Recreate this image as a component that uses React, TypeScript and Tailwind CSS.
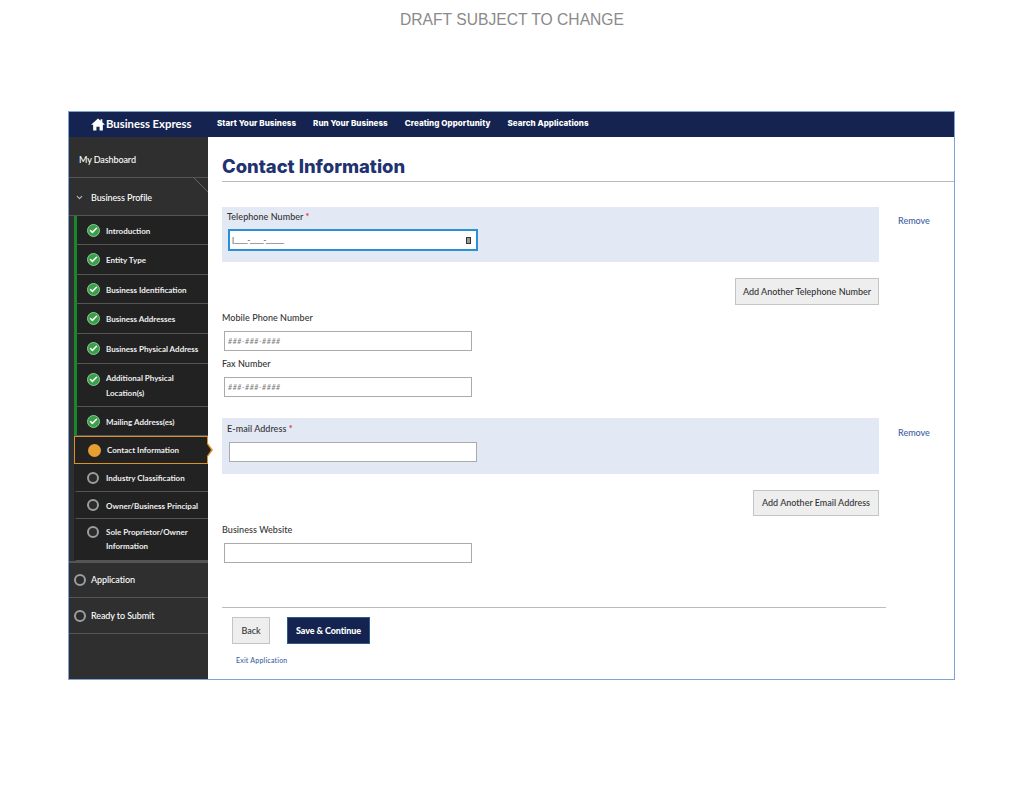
import { Check, ChevronDown } from "lucide-react";

const font = "[font-family:Lato,'Liberation_Sans',sans-serif]";

function StepIcon({ state }: { state: "done" | "current" | "todo" }) {
  if (state === "done") {
    return (
      <span className="flex h-[13px] w-[13px] shrink-0 items-center justify-center rounded-full border border-[#8fc796] bg-[#38a047]">
        <Check size={9} strokeWidth={4} className="text-white" />
      </span>
    );
  }
  if (state === "current") {
    return <span className="h-[13px] w-[13px] shrink-0 rounded-full bg-[#e5a02f]" />;
  }
  return <span className="h-[12px] w-[12px] shrink-0 rounded-full border-2 border-[#9d9d9d] bg-[#2c2c2c]" />;
}

function SubItem({
  label,
  second,
  state,
  height,
  top,
  shift,
  leading,
}: {
  label: string;
  second?: string;
  state: "done" | "todo";
  height: string;
  top?: string;
  shift?: string;
  leading?: string;
}) {
  return (
    <div
      className={`ml-[5px] flex border-b border-b-[#555] border-l-[3px] bg-[#222] pr-1 pl-[10px] ${height} ${
        second ? `items-start ${top}` : "items-center"
      } ${state === "done" ? "border-l-[#15892d]" : "border-l-[#222]"}`}
    >
      <StepIcon state={state} />
      <div
        className={`text-[8px] font-bold whitespace-nowrap text-[#eee] ${state === "done" ? "ml-[6px]" : "ml-[7px]"} ${
          second ? `${leading} ${shift}` : "pt-px"
        }`}
      >
        {label}
        {second && <div>{second}</div>}
      </div>
    </div>
  );
}

function TextInput({ placeholder }: { placeholder?: string }) {
  return (
    <div className="flex h-[20px] w-[248px] items-center border border-[#aaa] bg-white pl-[3px]">
      {placeholder && <span className="text-[7px] italic tracking-[0.6px] text-[#777]">{placeholder}</span>}
    </div>
  );
}

function GreyButton({ label, className }: { label: string; className: string }) {
  return (
    <div
      className={`flex items-center justify-center border border-[#c4c4c4] bg-[#eeeeee] text-[9px] font-medium text-[#333] ${className}`}
    >
      {label}
    </div>
  );
}

function Label({ children }: { children: React.ReactNode }) {
  return <div className="text-[9px] leading-[12px] font-medium tracking-[0.05px] text-[#333]">{children}</div>;
}

export default function App() {
  return (
    <div className={`min-h-[791px] bg-white ${font}`}>
      <div className="pt-[10px] text-center text-[15.65px] leading-[20px] text-[#8a8a8a] [font-family:'Liberation_Sans',sans-serif]">
        DRAFT SUBJECT TO CHANGE
      </div>
      <div className="mx-[68px] mt-[81px] h-[569px] w-[887px] border border-[#7ea3d6]">
        <header className="flex h-[25px] items-center bg-[#14234f] text-white">
          <div className="flex w-[148px] items-center pl-[22px]">
            <svg width="14" height="13" viewBox="0 0 16 15" fill="white">
              <path d="M8 0.5 L11 3.2 V1.5 H13 V5 L16 7.8 H13.6 V14.5 H9.8 V10 H6.2 V14.5 H2.4 V7.8 H0 Z" />
            </svg>
            <span className="ml-[1px] text-[11.3px] font-bold whitespace-nowrap">Business Express</span>
          </div>
          <nav className="-mt-[3px] flex gap-[17px] text-[8px] font-extrabold tracking-[0.06px] whitespace-nowrap [font-family:Inter,sans-serif]">
            <span>Start Your Business</span>
            <span>Run Your Business</span>
            <span>Creating Opportunity</span>
            <span>Search Applications</span>
          </nav>
        </header>
        <div className="flex h-[542px]">
          <aside className="w-[139px] shrink-0 bg-[#2f2f2f] text-white">
            <div className="flex h-[41px] items-center border-b border-[#555] pt-[6px] pl-[10px] text-[9px] font-medium tracking-[-0.1px]">
              My Dashboard
            </div>
            <div className="relative flex h-[38px] items-center border-b border-[#555] pt-[2px] pl-[6px] text-[9px] font-medium tracking-[-0.1px]">
              <ChevronDown size={9} strokeWidth={3} className="text-[#bbb]" />
              <span className="ml-[7px]">Business Profile</span>
              <svg className="absolute top-0 right-0" width="14" height="14" viewBox="0 0 14 14">
                <path d="M0 0 L14 14" stroke="#666" strokeWidth="1" fill="none" />
              </svg>
            </div>
            <SubItem label="Introduction" state="done" height="h-[29px]" />
            <SubItem label="Entity Type" state="done" height="h-[30px]" />
            <SubItem label="Business Identification" state="done" height="h-[29px]" />
            <SubItem label="Business Addresses" state="done" height="h-[30px]" />
            <SubItem label="Business Physical Address" state="done" height="h-[30px]" />
            <SubItem
              label="Additional Physical"
              second="Location(s)"
              state="done"
              height="h-[43px]"
              top="pt-[9px]"
              shift="-mt-[2px]"
              leading="leading-[15px]"
            />
            <SubItem label="Mailing Address(es)" state="done" height="h-[29px]" />
            <div className="relative ml-[5px] flex h-[28px] items-center border border-[#d8922a] bg-[#222] pl-[13px]">
              <StepIcon state="current" />
              <span className="ml-[6px] text-[8px] font-bold whitespace-nowrap text-[#eee]">Contact Information</span>
              <span className="absolute top-[5px] right-[-6px] h-0 w-0 border-y-[8px] border-l-[6px] border-y-transparent border-l-[#d8922a]" />
              <span className="absolute top-[7px] right-[-4px] h-0 w-0 border-y-[6px] border-l-[4px] border-y-transparent border-l-[#222]" />
            </div>
            <SubItem label="Industry Classification" state="todo" height="h-[28px]" />
            <SubItem label="Owner/Business Principal" state="todo" height="h-[27px]" />
            <SubItem
              label="Sole Proprietor/Owner"
              second="Information"
              state="todo"
              height="h-[42px]"
              top="pt-[7px]"
              shift="-mt-px"
              leading="leading-[14px]"
            />
            <div className="flex h-[37px] items-center border-t-2 border-b border-t-[#555] border-b-[#555] pl-[5px] text-[9px] font-medium tracking-[-0.1px]">
              <StepIcon state="todo" />
              <span className="ml-[5px]">Application</span>
            </div>
            <div className="flex h-[36px] items-center border-b border-[#555] pl-[5px] text-[9px] font-medium tracking-[-0.1px]">
              <StepIcon state="todo" />
              <span className="ml-[5px]">Ready to Submit</span>
            </div>
          </aside>
          <main className="min-w-0 flex-1 bg-white">
            <div className="ml-[14px] flex h-[45px] items-end border-b border-[#bbb] pb-[1px]">
              <h1 className="text-[18.4px] leading-[28px] font-extrabold text-[#1f3370] [font-family:Inter,sans-serif]">
                Contact Information
              </h1>
            </div>
            <div className="mt-[25px] ml-[14px] w-[708px]">
              <div className="flex">
                <div className="h-[55px] w-[657px] bg-[#e3e9f4] pt-[4px] pl-[5px]">
                  <Label>
                    Telephone Number <span className="text-red-600">*</span>
                  </Label>
                  <div className="mt-[6px] ml-[1px] flex h-[22px] w-[250px] items-center justify-between border-2 border-[#2b8fd6] bg-white pr-[5px] pl-[2px]">
                    <span className="text-[8px] leading-none text-[#333] [font-family:'Liberation_Sans',sans-serif]">|___-___-____</span>
                    <span className="flex h-[7px] w-[5px] border border-[#333] bg-[#999]" />
                  </div>
                </div>
                <span className="mt-[8px] ml-[19px] text-[9px] leading-[12px] font-medium text-[#3d5fa3]">Remove</span>
              </div>
              <div className="mt-[16px] flex w-[657px] justify-end">
                <GreyButton label="Add Another Telephone Number" className="h-[27px] w-[144px]" />
              </div>
              <div className="mt-[7px]">
                <Label>Mobile Phone Number</Label>
                <div className="mt-[7px] ml-[2px]">
                  <TextInput placeholder="###-###-####" />
                </div>
              </div>
              <div className="mt-[7px]">
                <Label>Fax Number</Label>
                <div className="mt-[7px] ml-[2px]">
                  <TextInput placeholder="###-###-####" />
                </div>
              </div>
              <div className="mt-[21px] flex">
                <div className="h-[56px] w-[657px] bg-[#e3e9f4] pt-[5px] pl-[5px]">
                  <Label>
                    E-mail Address <span className="text-red-600">*</span>
                  </Label>
                  <div className="mt-[7px] ml-[2px]">
                    <TextInput />
                  </div>
                </div>
                <span className="mt-[9px] ml-[19px] text-[9px] leading-[12px] font-medium text-[#3d5fa3]">Remove</span>
              </div>
              <div className="mt-[16px] flex w-[657px] justify-end">
                <GreyButton label="Add Another Email Address" className="h-[26px] w-[126px]" />
              </div>
              <div className="mt-[8px]">
                <Label>Business Website</Label>
                <div className="mt-[7px] ml-[2px]">
                  <TextInput />
                </div>
              </div>
              <div className="mt-[44px] w-[664px] border-t border-[#bbb] pt-[9px] pl-[10px]">
                <div className="flex gap-[17px]">
                  <GreyButton label="Back" className="h-[27px] w-[38px]" />
                  <div className="flex h-[27px] w-[83px] items-center justify-center border border-[#2d5c86] bg-[#14234f] text-[9px] font-black tracking-[-0.1px] text-white">
                    Save &amp; Continue
                  </div>
                </div>
                <div className="mt-[11px] ml-[4px] text-[7px] leading-[10px] font-medium tracking-[0.2px] text-[#3d5fa3]">
                  Exit Application
                </div>
              </div>
            </div>
          </main>
        </div>
      </div>
    </div>
  );
}
